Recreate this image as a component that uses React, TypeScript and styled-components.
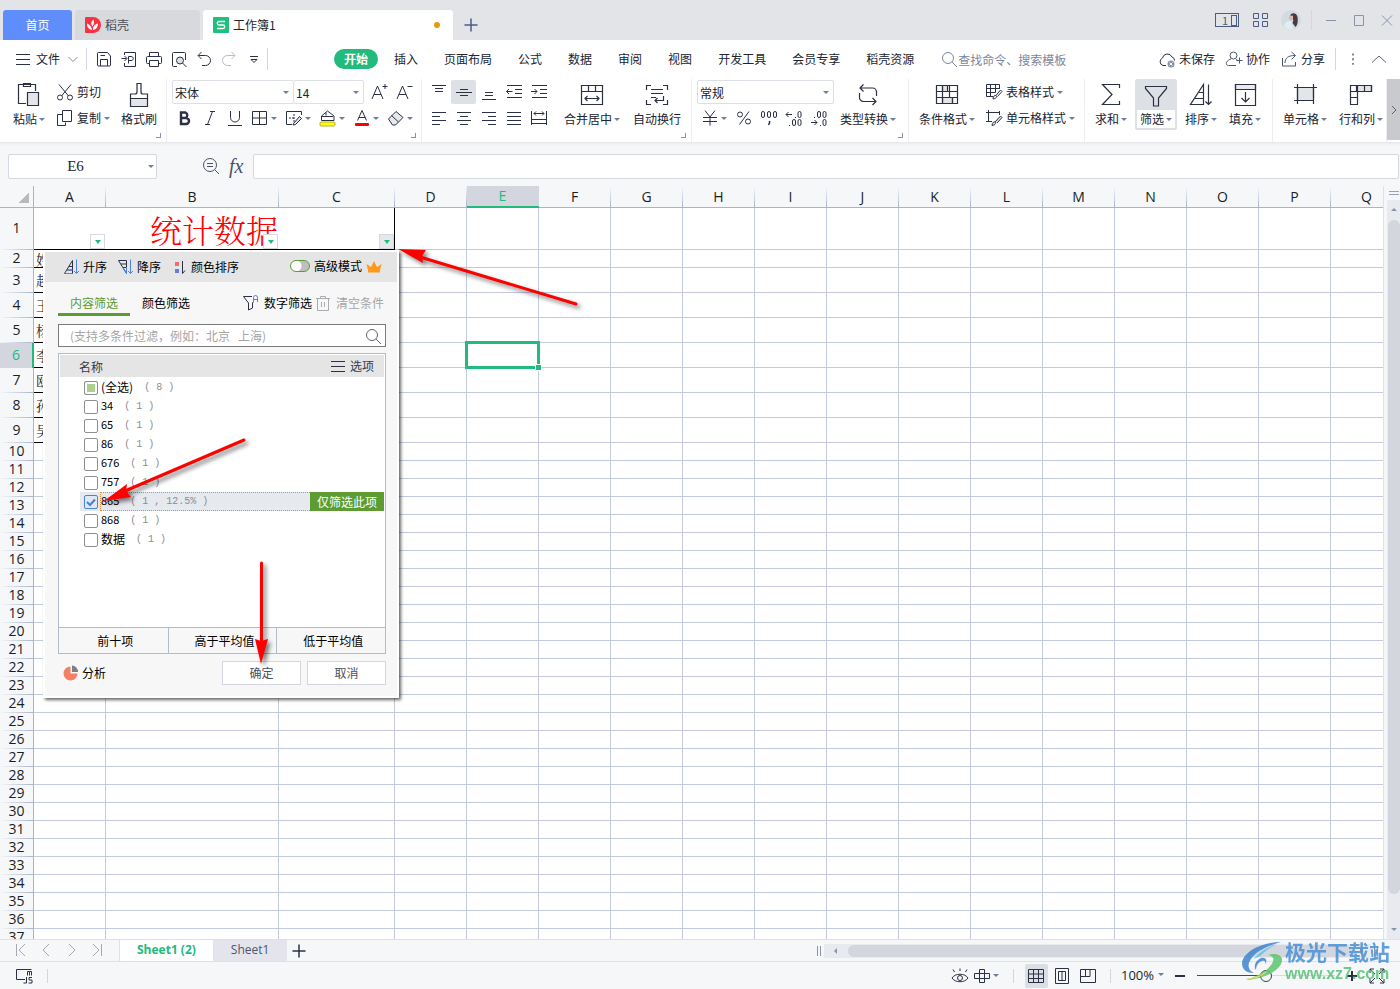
import React from "react";
import styled, { createGlobalStyle, css } from "styled-components";

const INK = "#2b3044";
const GREEN = "#21bb7e";
const LINE = "#c3cadd";
const CHROME = "#f6f7f9";
const SONG = `"Noto Serif CJK SC", "Noto Sans CJK SC", serif`;

const GlobalStyle = createGlobalStyle`
  *, *::before, *::after { box-sizing: border-box; }
  body { margin: 0; background: #fff; }
  body, button, input, select {
    font-family: "Noto Sans CJK SC", "Noto Sans", sans-serif;
    font-size: 12px;
    color: #20242f;
  }
  button { border: 0; padding: 0; background: none; white-space: nowrap; line-height: 18px; }
  svg { display: block; flex: none; }
`;

/* ---------- icons ---------- */

const shapes: Record<string, React.ReactNode> = {
  menu: <path d="M2 4.500h14M2 9.500h14M2 14.500h14" />,
  chevronDown: <path d="M4.500 7l4.500 4.500L13.500 7" stroke="#8a8f9d" />,
  chevronUp: <path d="M2 12.500l7-6.500 7 6.500" />,
  save: <path d="M2.500 3.500a1 1 0 011-1h9l3 3.500v9a1 1 0 01-1 1h-11a1 1 0 01-1-1zM5.500 16v-6.500h7V16M5.500 5.500h4.500" />,
  exportPdf: <path d="M4.500 5V2.500h11v14h-11V13M1.500 8.500h5M4.500 6l2.500 2.500L4.500 11M8.500 13.500V6.500h2.500c3 0 3 4 0 4H8.500" />,
  print: <path d="M4.500 6V2.500h9V6M4.500 13.500h-2a1 1 0 01-1-1V7.500a1 1 0 011-1h13a1 1 0 011 1v5a1 1 0 01-1 1h-2M4.500 10.500h9v6h-9z" />,
  preview: (
    <>
      <path d="M7 16.500H3.500a1 1 0 01-1-1v-12a1 1 0 011-1h11a1 1 0 011 1V10M12.500 13l4 4" />
      <circle cx="10" cy="10.500" r="3.500" fill="#dfe1e6" />
    </>
  ),
  undo: <path d="M6.500 2L3 5.500 6.500 9M3.500 5.500h7a5 5 0 010 10H7" />,
  redo: <path d="M11.500 2L15 5.500 11.500 9M14.500 5.500h-7a5 5 0 000 10H11" stroke="#b7bac2" />,
  more: <path d="M5 6.500h8M6 9.500l3 3 3-3z" />,
  cut: (
    <>
      <path d="M3 1.500l9.500 11.500M15 1.500L5.500 13" />
      <circle cx="4" cy="14.500" r="2.500" />
      <circle cx="14" cy="14.500" r="2.500" />
    </>
  ),
  copy: (
    <>
      <path d="M6.500 5.500h-5v11h8v-3" />
      <path d="M6.500 1.500h9v11h-9z" />
    </>
  ),
  bold: <path d="M5 3.500h4.500a3 3 0 010 5.500H5zM5 9h5a3 3 0 010 6H5z" strokeWidth="2.400" />,
  italic: <path d="M9 2.500h5M4 15.500h5M11.500 2.500L6.500 15.500" />,
  underline: <path d="M4.500 2v6.500a4.500 4.500 0 009 0V2M2 16.500h14" />,
  borders: <path d="M1.500 2.500h14v13h-14zM8.500 2.500v13M1.500 9h14" />,
  penTable: (
    <>
      <path d="M7 15.500H1.500v-13h15V6" />
      <path d="M9 5v8M4 9h6" strokeDasharray="2 1" />
      <path d="M8.500 14.500l6-7 2 2-6 6-2.500.500z" fill="#dfe1e6" />
    </>
  ),
  fill: (
    <>
      <path d="M8.500 2L2.500 7v4.500h12.500V7zM7 3.500v3M3 7.500h11" />
      <rect x="1" y="13" width="15" height="4" rx="1" fill="#ffff00" stroke="#b9ae45" />
    </>
  ),
  fontColor: (
    <>
      <path d="M4.500 11.500L9 1.500l4.500 10M6 8.500h6" />
      <rect x="2" y="14" width="14" height="3" rx="1" fill="#f00" stroke="none" />
    </>
  ),
  eraser: <path d="M1.500 10L9 2.500l7 6-7.500 7.500h-3zM4.500 6.500l7 6.500" fill="#e6e8ec" />,
  fontUp: <path d="M2 16L7.500 3 13 16M4 11.500h7M12.500 3.500h5M15 1v5" />,
  fontDown: <path d="M2 16L7.500 3 13 16M4 11.500h7M12.500 3.500h5" />,
  alignTop: <path d="M2 2.500h14M5 5.500h8M5 8.500h8" />,
  alignMid: <path d="M5 6.500h8M1 9.500h16M5 12.500h8" />,
  alignBottom: <path d="M5 9.500h8M5 12.500h8M2 16.500h14" />,
  outdent: <path d="M2 2.500h15M10 6.500h7M10 10.500h7M2 14.500h15M1.500 8.500h6M4 6L1.500 8.500 4 11" />,
  indent: <path d="M2 2.500h15M10 6.500h7M10 10.500h7M2 14.500h15M1 8.500h6M4.500 6L7 8.500 4.500 11" />,
  left: <path d="M2 3.500h14M2 7.500h8M2 11.500h14M2 15.500h8" />,
  center: <path d="M2 3.500h14M5 7.500h8M2 11.500h14M5 15.500h8" />,
  right: <path d="M2 3.500h14M8 7.500h8M2 11.500h14M8 15.500h8" />,
  justify: <path d="M2 3.500h14M2 7.500h14M2 11.500h14M2 15.500h14" />,
  distribute: <path d="M1.500 2v14M16.500 2v14M4 4.500h10M6 2.500l-2 2 2 2M12 2.500l2 2-2 2M1.500 10.500h15M1.500 14.500h15" />,
  yen: <path d="M4 1.500L9 8l5-6.500M2 8.500h14M2 12.500h14M9 8v8.500" />,
  percent: (
    <>
      <path d="M14 2.500L4.500 15.500" />
      <circle cx="5" cy="5.500" r="2.500" />
      <circle cx="13" cy="12.500" r="2.500" />
    </>
  ),
  thousands: (
    <>
      <rect x="1.500" y="2.500" width="3" height="6" rx="1.500" />
      <rect x="7.500" y="2.500" width="3" height="6" rx="1.500" />
      <rect x="13.500" y="2.500" width="3" height="6" rx="1.500" />
      <path d="M9.500 12v2l-1 2" strokeWidth="1.500" />
    </>
  ),
  decUp: (
    <>
      <path d="M1 5.500h6M3.500 3L1 5.500 3.500 8M10 8.500h1M4 16.500h1" />
      <rect x="13" y="2.500" width="3" height="6" rx="1.500" />
      <rect x="7.500" y="10.500" width="3" height="6" rx="1.500" />
      <rect x="13" y="10.500" width="3" height="6" rx="1.500" />
    </>
  ),
  decDown: (
    <>
      <path d="M1 13.500h6M4.500 11L7 13.500 4.500 16M10 16.500h1M4 8.500h1" />
      <rect x="7.500" y="2.500" width="3" height="6" rx="1.500" />
      <rect x="13" y="2.500" width="3" height="6" rx="1.500" />
      <rect x="13" y="10.500" width="3" height="6" rx="1.500" />
    </>
  ),
  tableStyle: (
    <>
      <path d="M8 13.500H1.500v-12h13V6M1.500 5.500h13M1.500 9.500h9M5.500 1.500v12M10.500 1.500v8" />
      <path d="M8 16c0-3 2-4 3-3.500s1 3-3 3.500zM11 12.500L15.500 7l1.500 1.500-4.500 5" fill="#fff" />
    </>
  ),
  cellStyle: (
    <>
      <path d="M3.500 1v12M1 3.500h14M1 12.500h6M14.500 2v4" />
      <path d="M7 16.500c0-3 2-4 3-3.500s1 3-3 3.500zM10 13l5.500-6 1.500 1.500-5 5.500" fill="#dfe1e6" />
    </>
  ),
  search: (
    <>
      <circle cx="8" cy="8" r="5.500" />
      <path d="M12 12l5 5" />
    </>
  ),
  zoomOut: (
    <>
      <circle cx="8" cy="8" r="6.500" />
      <path d="M13 13l4 4M5 6.500h6M5 9.500h6" />
    </>
  ),
  cloud: (
    <>
      <path d="M8 15.500H5a4 4 0 01-.500-7.500 5 5 0 019.500-1 3.500 3.500 0 012.500 3.500" />
      <circle cx="13" cy="14" r="3.500" fill="#8b93a8" stroke="none" />
      <path d="M11.500 12.500l3 3M14.500 12.500l-3 3" stroke="#fff" />
    </>
  ),
  people: (
    <>
      <circle cx="8.500" cy="5.500" r="3.500" />
      <path d="M6 9c-6 2-5.500 6.500-2.500 6.500H11M11 9.500l2 1M14.500 7.500v6M11.500 10.500h6" />
    </>
  ),
  share: <path d="M2.500 8v8h13v-4M5 13c0-5 3-7.500 10-7.500M11.500 2L15.500 5.500 11.500 9.500" />,
  dots: <path d="M9 2v2.500M9 8v2.500M9 14v2.500" strokeWidth="2.500" />,
  asc: (
    <>
      <path d="M1.500 15.500h8v-13zM6 8.500h3.500M4 12h5.500" />
      <path d="M13.500 1.500v14M11 13l2.500 2.500L16 13M1.500 15.500h8M4 12h5.500" stroke="#4d84e8" />
    </>
  ),
  desc: (
    <>
      <path d="M1.500 2.500h8v13zM4 6h5.500M6 9.500h3.500" />
      <path d="M13.500 1.500v14M11 13l2.500 2.500L16 13M9.500 9v6.500L6 9.500" stroke="#4d84e8" />
    </>
  ),
  colorSort: (
    <>
      <path d="M4 4h4v4H4z" fill="#ea6f6f" stroke="none" />
      <path d="M4 11h4v4H4z" fill="#5f7ee8" stroke="none" />
      <path d="M11.500 3v12.500l2.500-3" />
    </>
  ),
  funnelA: (
    <>
      <path d="M10 2.500H1.500L6.500 9v7l4-2V9l1-1.500" />
      <path d="M11.500 8V3.500a2 2 0 014 0V8M11.500 5.500h4" stroke="#4d84e8" />
    </>
  ),
  trash: <path d="M2 4.500h14M6.500 4V2.500h5V4M3.500 4.500v12h11v-12M7.500 8v5M10.500 8v5" stroke="#a9abb0" />,
  crown: <path d="M3 14.500h12V12l1.500-6-4.500 3L9 3 6 9 1.500 6 3 12z" fill="#ff9a1f" stroke="none" />,
  pie: (
    <>
      <path d="M8.500 2.500a7 7 0 107 7h-7z" fill="#f37f64" stroke="none" />
      <path d="M10 1.500a6.500 6.500 0 016 6.500h-6z" fill="#7d7f83" stroke="none" />
    </>
  ),
  first: <path d="M5.500 3v12M14 3L8 9l6 6" />,
  prev: <path d="M12 3L6 9l6 6" />,
  next: <path d="M6 3l6 6-6 6" />,
  last: <path d="M12.500 3v12M4 3l6 6-6 6" />,
  plus: <path d="M9 2.500v13M2.500 9h13" strokeWidth="1.500" />,
  macro: <path d="M8 12.500H1.500v-10h15M10 12.500H8M12.500 8.500v-4h2v4M14.500 4.500h2v4M11.500 10v6H8.500M17 10.500h-3V13h3v3h-3.500" />,
  eye: (
    <>
      <path d="M1 11c3-5 13-5 16 0-3 5-13 5-16 0zM3.500 5L2 2.500M14.500 5L16 2.500M9 4V1.500" />
      <circle cx="9" cy="11" r="2.500" />
    </>
  ),
  cross: <path d="M6.500 2.500h5v4h5v5h-5v4h-5v-4h-5v-5h5zM6.500 6.500h5v5h-5z" />,
  gridView: <path d="M1.500 2.500h15v13h-15zM1.500 7h15M1.500 11.500h15M6.500 2.500v13M11.500 2.500v13" />,
  pageView: <path d="M2.500 1.500h13v15h-13zM5.500 4.500h7v9h-7zM9 4.500v9" />,
  splitView: <path d="M1.500 2.500h15v13h-15zM6.500 2.500v7M1.500 9.500h9.500v-7" />,
  full: <path d="M2 6V2h4M12 2h4v4M16 12v4h-4M6 16H2v-4M2 2l5 5M16 2l-5 5M16 16l-5-5M2 16l5-5" />,
  minus: <path d="M4 9h10" strokeWidth="2" />,
  plusBold: <path d="M4 9h10M9 4v10" strokeWidth="2" />,
  apps: <path d="M2.500 2.500h5v5h-5zM11.500 2.500h5v5h-5zM2.500 10.500h5v5h-5zM11.500 10.500h5v5h-5z" />,
  winMin: <path d="M4 9.500h10" />,
  winMax: <path d="M4.500 4.500h9v10h-9z" />,
  winClose: <path d="M4 4.500l10 10M14 4.500l-10 10" />,
};

const bigShapes: Record<string, React.ReactNode> = {
  paste: (
    <>
      <path d="M11 22.500H3.500v-19h17V10M8.500 2.500h7v3h-7z" />
      <path d="M12.500 11.500h11v13h-11z" fill="#e3e5e9" />
    </>
  ),
  brush: (
    <>
      <path d="M12 2.500h4v8.500q0 2 2 2h4.500v4.500h-17V13H10q2 0 2-2z" />
      <path d="M5.500 17.500h17v8h-17z" fill="#e3e5e9" />
    </>
  ),
  merge: <path d="M3.500 4.500h21v19h-21zM3.500 10.500h21M10.500 4.500v6M17.500 4.500v6M7 17.500h14M9.500 15L7 17.500 9.500 20M18.500 15l2.500 2.500-2.500 2.500" />,
  wrap: <path d="M8 4.500H3.500V9M20 4.500h4.500V9M8 23.500H3.500V19M20 23.500h4.500V19M8 8.500h12M8 12.500h12M8 16.500h5M20.500 15v4.500H12M14.500 17L12 19.500l2.500 2.500" />,
  convert: <path d="M9.500 3.500L6 7l3.500 3.500M6.500 7h12a4 4 0 014 4v4M5.500 12v4a4 4 0 004 4.500H22M18.500 17l3.500 3.500-3.500 3.500" />,
  cond: (
    <>
      <path d="M9.500 4.500h5v6h-5zM9.500 16.500h10v6h-10z" fill="#e3e5e9" />
      <path d="M3.500 4.500h21v18h-21zM3.500 10.500h21M3.500 16.500h21M9.500 4.500v18M16.500 4.500v12M19.500 16.500v6" />
    </>
  ),
  sum: <path d="M22.500 7V3.500h-17L15 13.500 5.500 23.500h17V20" />,
  funnel: <path d="M3.500 4.500h21v2l-8 9.500v8h-5v-8l-8-9.500z" />,
  sort: <path d="M3.500 23.500h13V3.500zM12 11.500h4.500M8 17.500h8.500M21.500 3.500v20M18.500 20.500l3 3 3-3" />,
  fillDown: (
    <>
      <path d="M4.500 3.500h20v5h-20z" fill="#e8eaee" />
      <path d="M4.500 3.500h20v21h-20zM4.500 8.500h20M14.500 11v10M10.500 17l4 4 4-4" />
    </>
  ),
  cell: (
    <>
      <path d="M6.500 6.500h16v13h-16z" fill="#e3e5e9" />
      <path d="M6.500 3v20M22.500 3v14M3 6.500h23M3 19.500h17M22.500 20v3" />
    </>
  ),
  rowcol: (
    <>
      <path d="M9.500 4.500h15v6h-15z" fill="#e3e5e9" />
      <path d="M3.500 4.500h21v6h-21zM10.500 4.500v19h-7v-19M17.500 4.500v6M3.500 16.500h7" />
    </>
  ),
};

const Glyph = ({ name, color = INK, size = 18 }: { name: string; color?: string; size?: number }) => (
  <svg width={size} height={size} viewBox="0 0 18 18" fill="none" stroke={color} aria-hidden="true">
    {shapes[name]}
  </svg>
);
const BigGlyph = ({ name }: { name: string }) => (
  <svg width="28" height="28" viewBox="0 0 28 28" fill="none" stroke={INK} strokeWidth="1.200" aria-hidden="true">
    {bigShapes[name]}
  </svg>
);

const Caret = styled.i`
  flex: none;
  border: 3px solid transparent;
  border-top-color: #6f7d98;
  border-bottom-width: 0;
`;

/* ---------- frame ---------- */

const Page = styled.div`
  display: flex;
  flex-direction: column;
  height: 100vh;
  overflow: hidden;
  position: relative;
`;

const TitleBar = styled.header`
  display: flex;
  align-items: flex-end;
  height: 40px;
  background: #e3e4e8;
  padding-left: 3px;
  flex: none;
`;
const DocTab = styled.button<{ $w: number; $bg: string; $fg: string }>`
  display: flex;
  align-items: center;
  justify-content: center;
  gap: 4px;
  width: ${(p) => p.$w}px;
  height: 30px;
  margin-right: 3px;
  border-radius: 3px 3px 0 0;
  background: ${(p) => p.$bg};
  color: ${(p) => p.$fg};
  ${(p) => p.$w > 80 && css`justify-content: flex-start; padding: 0 13px 0 10px;`}
`;
const Unsaved = styled.i`
  width: 6px;
  height: 6px;
  margin-left: auto;
  border-radius: 50%;
  background: #e59a0c;
`;
const NewTab = styled.button`
  height: 30px;
  padding: 0 6px;
`;
const WindowTools = styled.div`
  display: flex;
  align-items: center;
  gap: 10px;
  height: 40px;
  margin-left: auto;
  padding-right: 4px;
`;
const ProfileTools = styled.div`
  display: flex;
  align-items: center;
  gap: 12px;
`;
const Counter = styled.button`
  display: flex;
  justify-content: flex-end;
  align-items: center;
  gap: 3px;
  width: 24px;
  height: 14px;
  padding-right: 1px;
  border: 1px solid #4c5b80;
  font-size: 11px;
  line-height: 12px;
  color: #4c5b80;
  &::after { content: ""; width: 6px; height: 11px; border: 1px solid #4c5b80; }
`;

const MenuBar = styled.nav`
  display: flex;
  align-items: center;
  height: 38px;
  padding-left: 14px;
  flex: none;
`;
const Rule = styled.i<{ $l?: number; $r?: number; $h?: number }>`
  width: 1px;
  height: ${(p) => p.$h ?? 22}px;
  margin: 0 ${(p) => p.$r ?? 0}px 0 ${(p) => p.$l ?? 0}px;
  background: #d3d7df;
  flex: none;
`;
const FileButton = styled.button`
  display: flex;
  align-items: center;
  gap: 4px;
`;
const QuickBar = styled.div`
  display: flex;
  gap: 7px;
  padding: 0 4px 0 8px;
`;
const Tabs = styled.div`
  display: flex;
  gap: 6px;
  margin-left: 66px;
`;
const MenuTab = styled.button<{ $on?: boolean }>`
  height: 20px;
  padding: 0 10px;
  border-radius: 10px;
  ${(p) => p.$on && css`background: ${GREEN}; color: #fff; font-weight: 700;`}
`;
const CommandSearch = styled.label`
  display: flex;
  align-items: center;
  margin-left: 16px;
  input {
    width: 120px;
    border: 0;
    padding: 0;
    outline: 0;
    background: none;
  }
  input::placeholder { color: #7c869c; opacity: 1; }
`;
const Account = styled.div`
  display: flex;
  align-items: center;
  gap: 10px;
  margin-left: auto;
  padding-right: 12px;
  button { display: flex; align-items: center; gap: 3px; }
`;

/* ---------- ribbon ---------- */

const Ribbon = styled.section`
  display: flex;
  height: 64px;
  padding-top: 1px;
  flex: none;
  overflow: hidden;
  position: relative;
  background: #fff;
`;
const Group = styled.div<{ $w: number; $gap: number; $pad: number }>`
  display: flex;
  align-items: flex-start;
  position: relative;
  flex: none;
  width: ${(p) => p.$w}px;
  gap: ${(p) => p.$gap}px;
  padding-left: ${(p) => p.$pad}px;
  border-right: 1px solid #eceef1;
`;
const Launcher = styled.i`
  position: absolute;
  right: 5px;
  bottom: 4px;
  width: 5px;
  height: 5px;
  border: solid #8a93a8;
  border-width: 0 1px 1px 0;
`;
const BigButton = styled.button<{ $on?: boolean }>`
  flex: none;
  > span { display: flex; align-items: center; justify-content: center; gap: 2px; height: 16px; }
  > span:first-child { height: 32px; }
  ${(p) => p.$on && css`
    height: 51px;
    margin: 0 -4px;
    border: 2px solid #dde1e6;
    border-radius: 2px;
    > span { height: 18px; padding: 0 3px; }
    > span:first-child { height: 29px; background: #dde1e6; }
  `}
`;
const Stack = styled.div`
  display: flex;
  flex-direction: column;
  flex: none;
`;
const Line = styled.div`
  display: flex;
  align-items: center;
  height: 26px;
`;
const Tool = styled.button<{ $on?: boolean }>`
  display: flex;
  align-items: center;
  justify-content: center;
  width: 25px;
  height: 24px;
  border-radius: 2px;
  background: ${(p) => (p.$on ? "#dde1e6" : "none")};
`;
const ToolDrop = styled.button`
  display: flex;
  align-items: center;
  gap: 2px;
  width: 34px;
  padding-left: 4px;
`;
const TextTool = styled.button`
  display: flex;
  align-items: center;
  gap: 3px;
`;
const Picker = styled.span<{ $w: number }>`
  display: flex;
  align-items: center;
  width: ${(p) => p.$w}px;
  height: 24px;
  padding-right: 4px;
  border: 1px solid #dcdfe5;
  border-radius: 2px;
  & + & { margin-left: -1px; margin-right: 2px; }
  select {
    appearance: none;
    flex: 1;
    min-width: 0;
    border: 0;
    padding: 0 2px;
    outline: 0;
    background: none;
  }
`;
const Scroller = styled.button`
  display: flex;
  align-items: center;
  justify-content: center;
  margin-left: auto;
  width: 13px;
  height: 61px;
  background: #c8cace;
  flex: none;
  position: sticky;
  right: 0;
`;

/* ---------- formula bar ---------- */

const FormulaBar = styled.section`
  display: flex;
  align-items: center;
  height: 44px;
  padding: 4px 1px 0 8px;
  background: linear-gradient(#e6e8eb, ${CHROME} 4px);
  flex: none;
`;
const NameBox = styled.span`
  display: flex;
  align-items: center;
  width: 149px;
  height: 25px;
  padding-right: 2px;
  border: 1px solid #d5d8df;
  border-radius: 2px;
  background: #fff;
  input {
    flex: 1;
    min-width: 0;
    border: 0;
    outline: 0;
    padding: 0 6px 0 0;
    text-align: center;
    background: none;
    font-family: "Liberation Serif", serif;
    font-size: 15px;
  }
`;
const FxTools = styled.div`
  display: flex;
  align-items: center;
  gap: 9px;
  width: 96px;
  padding-left: 45px;
`;
const Fx = styled.button`
  font: italic 20px/20px "Liberation Serif", serif;
  color: #4a5266;
`;
const Formula = styled.input`
  flex: 1;
  min-width: 0;
  height: 25px;
  border: 1px solid #d5d8df;
  border-radius: 2px;
`;

/* ---------- sheet ---------- */

const Work = styled.main`
  display: flex;
  flex: 1;
  min-height: 0;
  position: relative;
  background: ${CHROME};
`;
const GridClip = styled.div`
  flex: 1;
  min-width: 0;
  overflow: hidden;
`;
const Grid = styled.table`
  table-layout: fixed;
  width: 0;
  border-collapse: separate;
  border-spacing: 0;
  background: #fff;
  font-family: "Open Sans", "Noto Sans CJK SC", sans-serif;
  font-size: 14px;
  th, td { padding: 0; font-weight: 400; line-height: 16px; }
`;
const ColHead = styled.th<{ $on?: boolean }>`
  height: 22px;
  border-bottom: 1px solid #a9b4cc;
  color: #1b1e27;
  background: linear-gradient(transparent, #a9b4cc) right / 1px 100% no-repeat ${CHROME};
  && { padding-right: 1px; }
  ${(p) => p.$on && css`background: #d3d6de; color: ${GREEN}; border-bottom: 2px solid ${GREEN};`}
`;
const Corner = styled.th`
  border-right: 1px solid #a9b4cc;
  border-bottom: 1px solid #a9b4cc;
  background: linear-gradient(135deg, transparent 50%, #b8babd 50%) 18px 6px / 11px 11px no-repeat ${CHROME};
`;
const RowHead = styled.th<{ $h: number; $on?: boolean }>`
  height: ${(p) => p.$h}px;
  color: #1b1e27;
  border-right: 1px solid #a9b4cc;
  background: linear-gradient(to right, transparent, #a9b4cc) bottom / 100% 1px no-repeat ${CHROME};
  && { padding-bottom: 2px; }
  ${(p) => p.$on && css`background: #d3d6de; color: ${GREEN}; border-right: 2px solid ${GREEN};`}
`;
const Cell = styled.td<{ $ink?: boolean; $sel?: boolean }>`
  border-right: 1px solid ${LINE};
  border-bottom: 1px solid ${(p) => (p.$ink ? "#000" : LINE)};
  ${(p) => p.$ink && css`text-indent: 2px; font-family: ${SONG};`}
  ${(p) => p.$sel && css`
    position: relative;
    &::before {
      content: "";
      position: absolute;
      inset: -2px;
      border: 3px solid ${GREEN};
    }
    &::after {
      content: "";
      position: absolute;
      right: -4px;
      bottom: -4px;
      width: 7px;
      height: 7px;
      border: 1px solid #fff;
      background: ${GREEN};
    }
  `}
`;
const TitleCell = styled.td`
  position: relative;
  border-right: 1px solid #000;
  border-bottom: 1px solid #000;
  text-align: center;
  color: #f00;
`;
const TitleText = styled.div`
  font-family: ${SONG};
  font-size: 32px;
  font-weight: 300;
  line-height: 38px;
`;
const FilterMarks = styled.div`
  position: absolute;
  inset: auto 0 0 0;
  display: grid;
  grid-template-columns: 71px 173px 116px;
  justify-items: end;
`;
const FilterMark = styled.button<{ $on?: boolean }>`
  display: flex;
  align-items: center;
  justify-content: center;
  width: 15px;
  height: 15px;
  border: 1px solid #d6d9e0;
  background: ${(p) => (p.$on ? "#e4e7ec" : "#fff")};
  ${Caret} { border-top-color: ${GREEN}; border-top-width: 4px; }
`;
const VScroll = styled.div`
  display: flex;
  flex-direction: column;
  align-items: center;
  width: 17px;
  padding-left: 3px;
  border-left: 1px solid #dfe1e8;
  flex: none;
`;
const Splitter = styled.i`
  width: 10px;
  height: 4px;
  margin: 5px 0 5px;
  border: solid #97a2b8;
  border-width: 1px 0;
  flex: none;
`;
const Track = styled.div`
  display: flex;
  flex-direction: column;
  align-items: center;
  align-self: stretch;
  flex: 1;
  padding: 8px 0 8px;
  background: #e9eaef;
`;
const VThumb = styled.i`
  flex: 1;
  width: 12px;
  margin: 9px 0 34px;
  border-radius: 6px;
  background: #d4d6dd;
`;
const ArrowTip = styled.i<{ $dir: "up" | "down" | "left" | "right" }>`
  border: 3px solid transparent;
  flex: none;
  ${(p) => p.$dir === "up" && css`border-bottom-color: #8794ad; border-top-width: 0;`}
  ${(p) => p.$dir === "down" && css`border-top-color: #8794ad; border-bottom-width: 0;`}
  ${(p) => p.$dir === "left" && css`border-right-color: #8794ad; border-left-width: 0;`}
  ${(p) => p.$dir === "right" && css`border-left-color: #8794ad; border-right-width: 0;`}
`;

/* ---------- filter panel ---------- */

const Panel = styled.section`
  position: absolute;
  left: 43px;
  top: 64px;
  width: 356px;
  border: 2px solid #fff;
  background: #f7f7f7;
  box-shadow: 2px 2px 3px rgba(0, 0, 0, 0.6);
  color: #000;
  button, label { color: #000; }
`;
const PanelHead = styled.div`
  display: flex;
  align-items: center;
  height: 30px;
  padding: 0 14px 0 18px;
  background: #e5e5e5;
`;
const PanelTool = styled.button<{ $gap: number; $muted?: boolean }>`
  display: flex;
  align-items: center;
  gap: 2px;
  margin-right: ${(p) => p.$gap}px;
  && { ${(p) => p.$muted && css`color: #a5a5a5;`} }
`;
const Toggle = styled.label`
  display: flex;
  align-items: center;
  gap: 4px;
  margin: 0 3px 0 auto;
  padding-bottom: 2px;
  line-height: 16px;
  input {
    appearance: none;
    width: 20px;
    height: 12px;
    margin: 0;
    border: 1px solid #5c9c30;
    border-radius: 6px;
    background: radial-gradient(circle at 5px 5px, #fff 5px, #bfbfbf 6px);
  }
`;
const PanelBody = styled.div`
  padding: 0 11px 11px 13px;
`;
const PanelTabs = styled.div`
  display: flex;
  align-items: center;
  height: 34px;
  margin-right: 2px;
`;
const PanelTab = styled.button<{ $on?: boolean }>`
  height: 34px;
  padding: 10px 12px 0;
  border-bottom: 3px solid ${(p) => (p.$on ? "#5c9c30" : "transparent")};
  && { color: ${(p) => (p.$on ? "#5c9c30" : "#000")}; }
`;
const Conditions = styled.div`
  display: flex;
  margin-left: auto;
  padding-top: 8px;
  button { gap: 4px; }
`;
const PanelSearch = styled.label`
  display: flex;
  align-items: center;
  height: 23px;
  margin: 8px 0 6px;
  padding: 0 3px 0 11px;
  border: 1px solid #7b7b7b;
  background: #fff;
  input { flex: 1; border: 0; padding: 0; outline: 0; background: none; }
  input::placeholder { color: #a5a5a5; opacity: 1; }
`;
const ListBox = styled.div`
  display: flex;
  flex-direction: column;
  height: 301px;
  border: 1px solid #b3bcc9;
  background: #fff;
`;
const ListHead = styled.div`
  display: flex;
  align-items: center;
  justify-content: space-between;
  height: 22px;
  margin: 1px 1px 0;
  padding: 0 10px 0 19px;
  background: #e5e5e5;
  color: #333a4a;
  flex: none;
  button { display: flex; align-items: center; gap: 3px; color: #333a4a; }
`;
const Items = styled.ul`
  flex: 1;
  margin: 0;
  padding: 1px 0 0;
  list-style: none;
`;
const Item = styled.li<{ $on?: boolean }>`
  display: flex;
  align-items: stretch;
  height: 19px;
  margin: 0 1px 0 21px;
  background: ${(p) => (p.$on ? "#e6e9ee" : "none")};
`;
const ItemLabel = styled.label<{ $on?: boolean }>`
  display: flex;
  align-items: center;
  flex: 1;
  padding-left: 4px;
  line-height: 17px;
  input {
    appearance: none;
    width: 14px;
    height: 14px;
    margin: 0 3px 0 0;
    border: 1px solid #8f8f8f;
    border-radius: 2px;
    background: #fff;
  }
  input[data-part="true"] { background: #a9d28f; box-shadow: inset 0 0 0 2px #fff; }
  input:checked {
    border-color: #4b85d6;
    background: url('data:image/svg+xml,<svg xmlns="http://www.w3.org/2000/svg" viewBox="0 0 12 12" fill="none" stroke="%234b7fd0" stroke-width="2"><path d="M2 6l3 3 5-5.500"/></svg>') #dfe9f8;
  }
  > span {
    display: flex;
    align-items: center;
    flex: 1;
    align-self: stretch;
    border: 1px dotted ${(p) => (p.$on ? "#e88a3a" : "transparent")};
    border-right: 0;
    margin-left: -1px;
  }
`;
const ItemName = styled.b<{ $cjk: boolean }>`
  padding-bottom: 2px;
  font-size: ${(p) => (p.$cjk ? 12 : 11)}px;
  font-weight: 400;
`;
const Count = styled.small`
  margin-left: 11px;
  font-family: "Liberation Mono", monospace;
  font-size: 10px;
  color: #8d8d8d;
`;
const OnlyThis = styled.button`
  width: 74px;
  background: #5c9c30;
  && { color: #fff; }
`;
const QuickPicks = styled.div`
  display: grid;
  grid-template-columns: repeat(3, 1fr);
  height: 26px;
  border-top: 1px solid #b3bcc9;
  background: #f7f7f7;
  button + button { border-left: 1px solid #b3bcc9; }
  button { padding-left: 4px; }
`;
const PanelFoot = styled.div`
  display: flex;
  align-items: center;
  gap: 6px;
  margin-top: 7px;
  padding-left: 4px;
`;
const Analyse = styled.div`
  margin-right: auto;
`;
const Dialog = styled.button`
  width: 79px;
  height: 24px;
  border: 1px solid #d3d6de;
  background: #fff;
  && { color: #4a4f5c; }
`;

/* ---------- footer ---------- */

const SheetBar = styled.footer`
  display: flex;
  height: 23px;
  border: solid #dfe1e8;
  border-width: 1px 0;
  background: ${CHROME};
  flex: none;
`;
const SheetNav = styled.div`
  display: flex;
  align-items: center;
  gap: 8px;
  width: 120px;
  padding: 0 0 1px 11px;
  border-right: 1px solid #dfe1e8;
`;
const SheetTab = styled.button<{ $on?: boolean }>`
  padding: 0 ${(p) => (p.$on ? 17 : 18)}px 1px;
  font-family: "Open Sans", sans-serif;
  background: ${(p) => (p.$on ? "#fff" : "#e4e5ec")};
  color: ${(p) => (p.$on ? GREEN : "#4c566e")};
  font-weight: ${(p) => (p.$on ? 700 : 400)};
`;
const AddSheet = styled.button`
  padding: 0 3px;
`;
const HScroll = styled.div`
  display: flex;
  align-items: center;
  width: 561px;
  gap: 3px;
  margin: 0 22px 0 auto;
`;
const Grip = styled.i`
  width: 4px;
  height: 10px;
  border: solid #8794ad;
  border-width: 0 1px;
`;
const HTrack = styled.div`
  display: flex;
  align-items: center;
  flex: 1;
  height: 14px;
  padding: 0 8px 0 10px;
  background: #e9eaef;
`;
const HThumb = styled.i`
  flex: 1;
  height: 12px;
  margin: 0 8px 0 11px;
  border-radius: 6px;
  background: #d4d6dd;
`;
const StatusBar = styled.footer`
  display: flex;
  align-items: center;
  height: 27px;
  padding: 0 14px 0 15px;
  background: ${CHROME};
  flex: none;
`;
const ViewTools = styled.div`
  display: flex;
  align-items: center;
  margin-left: auto;
`;
const ViewButton = styled.button<{ $on?: boolean }>`
  display: flex;
  align-items: center;
  justify-content: center;
  width: 23px;
  height: 24px;
  margin-right: 3px;
  border-radius: 2px;
  background: ${(p) => (p.$on ? "#dadfe6" : "none")};
`;
const ZoomPick = styled.button`
  display: flex;
  align-items: center;
  gap: 4px;
  margin-right: 7px;
  padding-bottom: 2px;
  font-family: "Open Sans", sans-serif;
  font-size: 13px;
`;
const ZoomSlider = styled.input`
  appearance: none;
  width: 138px;
  height: 12px;
  margin: 0 8px;
  background: linear-gradient(to right, #3f4a66 50%, #d7dae1 50%) center / 100% 1px no-repeat;
  &::-webkit-slider-thumb {
    appearance: none;
    width: 12px;
    height: 12px;
    border: 1px solid #3b3f4a;
    border-radius: 50%;
    background: ${CHROME};
  }
`;

/* ---------- overlays ---------- */

const Arrows = styled.svg`
  position: absolute;
  left: 0;
  top: 0;
  pointer-events: none;
  filter: drop-shadow(3px 3px 2px rgba(0, 0, 0, 0.5));
`;
const Brand = styled.div`
  position: absolute;
  right: 10px;
  bottom: 5px;
  display: flex;
  align-items: center;
  gap: 2px;
  opacity: 0.85;
  pointer-events: none;
`;
const BrandText = styled.div`
  color: #4a90d6;
  font-size: 21px;
  font-weight: 700;
  line-height: 26px;
  small {
    display: block;
    font: 700 16px/20px "Liberation Sans", sans-serif;
    color: #5bc07a;
  }
`;

const columns = "ABCDEFGHIJKLMNOPQ".split("");
const colWidth = (c: string) => (c === "B" ? 173 : c === "C" ? 116 : 72);
const names: Record<number, string> = { 2: "姓名", 3: "赵", 4: "王", 5: "杨", 6: "李", 7: "欧", 8: "孙", 9: "吴" };
const rowHeight = (r: number) => (r === 1 ? 42 : r >= 3 && r <= 9 ? 25 : 18);
const rows = Array.from({ length: 37 }, (_, i) => i + 1);

const filterItems = [
  { name: "(全选)", count: "( 8 )", part: true },
  { name: "34", count: "( 1 )" },
  { name: "65", count: "( 1 )" },
  { name: "86", count: "( 1 )" },
  { name: "676", count: "( 1 )" },
  { name: "757", count: "( 1 )" },
  { name: "865", count: "( 1 , 12.5% )", on: true },
  { name: "868", count: "( 1 )" },
  { name: "数据", count: "( 1 )" },
];

const Big = ({ icon, label, drop = true, on }: { icon: string; label: string; drop?: boolean; on?: boolean }) => (
  <BigButton $on={on}>
    <span><BigGlyph name={icon} /></span>
    <span>{label}{drop && <Caret />}</span>
  </BigButton>
);
const IconTool = ({ icon, on }: { icon: string; on?: boolean }) => (
  <Tool $on={on} aria-label={icon}><Glyph name={icon} /></Tool>
);
const DropTool = ({ icon }: { icon: string }) => (
  <ToolDrop aria-label={icon}><Glyph name={icon} /><Caret /></ToolDrop>
);

const FilterPanel = () => (
  <Panel>
    <PanelHead>
      <PanelTool $gap={10}><Glyph name="asc" />升序</PanelTool>
      <PanelTool $gap={10}><Glyph name="desc" />降序</PanelTool>
      <PanelTool $gap={0}><Glyph name="colorSort" />颜色排序</PanelTool>
      <Toggle><input type="checkbox" />高级模式</Toggle>
      <Glyph name="crown" />
    </PanelHead>
    <PanelBody>
      <PanelTabs>
        <PanelTab $on>内容筛选</PanelTab>
        <PanelTab>颜色筛选</PanelTab>
        <Conditions>
          <PanelTool $gap={2}><Glyph name="funnelA" />数字筛选</PanelTool>
          <PanelTool $gap={0} $muted><Glyph name="trash" />清空条件</PanelTool>
        </Conditions>
      </PanelTabs>
      <PanelSearch>
        <input aria-label="搜索" placeholder="(支持多条件过滤，例如：北京   上海)" />
        <Glyph name="search" color="#5b6478" />
      </PanelSearch>
      <ListBox>
        <ListHead>
          名称
          <button><Glyph name="menu" />选项</button>
        </ListHead>
        <Items>
          {filterItems.map((it) => (
            <Item key={it.name} $on={it.on}>
              <ItemLabel $on={it.on}>
                <input type="checkbox" defaultChecked={it.on} data-part={it.part} />
                <span><ItemName $cjk={!/^\d+$/.test(it.name)}>{it.name}</ItemName><Count>{it.count}</Count></span>
              </ItemLabel>
              {it.on && <OnlyThis>仅筛选此项</OnlyThis>}
            </Item>
          ))}
        </Items>
        <QuickPicks>
          <button>前十项</button>
          <button>高于平均值</button>
          <button>低于平均值</button>
        </QuickPicks>
      </ListBox>
      <PanelFoot>
        <Analyse><PanelTool $gap={0}><Glyph name="pie" />分析</PanelTool></Analyse>
        <Dialog>确定</Dialog>
        <Dialog>取消</Dialog>
      </PanelFoot>
    </PanelBody>
  </Panel>
);

const Sheet = () => (
  <Grid>
    <colgroup>
      <col style={{ width: 34 }} />
      {columns.map((c) => <col key={c} style={{ width: colWidth(c) }} />)}
    </colgroup>
    <thead>
      <tr>
        <Corner />
        {columns.map((c) => <ColHead key={c} $on={c === "E"}>{c}</ColHead>)}
      </tr>
    </thead>
    <tbody>
      {rows.map((r) => (
        <tr key={r}>
          <RowHead $h={rowHeight(r)} $on={r === 6}>{r}</RowHead>
          {r === 1 && (
            <TitleCell colSpan={3}>
              <TitleText>统计数据</TitleText>
              <FilterMarks>
                <FilterMark aria-label="A"><Caret /></FilterMark>
                <FilterMark aria-label="B"><Caret /></FilterMark>
                <FilterMark aria-label="C" $on><Caret /></FilterMark>
              </FilterMarks>
            </TitleCell>
          )}
          {columns.slice(r === 1 ? 3 : 0).map((c) => (
            <Cell key={c} $ink={c === "A" && r in names} $sel={c === "E" && r === 6}>
              {c === "A" ? names[r] : null}
            </Cell>
          ))}
        </tr>
      ))}
    </tbody>
  </Grid>
);

export default function App() {
  return (
    <Page>
      <GlobalStyle />
      <TitleBar>
        <DocTab $w={69} $bg="#5f8dfb" $fg="#fff">首页</DocTab>
        <DocTab $w={125} $bg="#d8d9dd" $fg="#4a4f5c">
          <svg width="16" height="16" viewBox="0 0 16 16" aria-hidden="true">
            <path d="M1 0h7a8 8 0 010 16H1a1 1 0 01-1-1V1a1 1 0 011-1z" fill="#fb3040" />
            <path d="M7 13C3 12 1.500 9 2 6.500c3 1 4.500 3.500 5 6.500zM7.500 9.500C5.500 7 6 4 8.500 2.500c1 2 .500 5-1 7zM8 13c0-4 2-6 5-6.500 0 3.500-2 6-5 6.500z" fill="#fff" />
          </svg>
          稻壳
        </DocTab>
        <DocTab $w={250} $bg="#fff" $fg="#20242f">
          <svg width="16" height="16" viewBox="0 0 16 16" aria-hidden="true">
            <rect width="16" height="16" rx="1" fill="#1fbf7c" />
            <path d="M12 4.500H6a1.500 1.500 0 000 3.500h4a1.500 1.500 0 010 3.500H4" fill="none" stroke="#fff" strokeWidth="1.300" />
          </svg>
          工作簿1
          <Unsaved />
        </DocTab>
        <NewTab aria-label="新建"><Glyph name="plus" color="#4c5b80" /></NewTab>
        <WindowTools>
          <ProfileTools>
            <Counter>1</Counter>
            <Glyph name="apps" color="#4c5b80" />
            <svg width="20" height="20" viewBox="0 0 20 20" aria-hidden="true">
              <circle cx="10" cy="10" r="10" fill="#cfdde3" />
              <path d="M10 4c3-2 6 0 6.500 3s.500 8-2 10l-3-4 1-3-4-2z" fill="#4a3a40" />
              <path d="M8.500 6l3.500-.500v4L10 11 8 9z" fill="#e3b8a8" />
              <path d="M3 16c1-4 3-5 7-5l2.500 8c-4 1-7 0-9.500-3z" fill="#e0eef1" />
            </svg>
          </ProfileTools>
          <Rule $h={20} />
          <Glyph name="winMin" color="#8b93ab" />
          <Glyph name="winMax" color="#8b93ab" />
          <Glyph name="winClose" color="#8b93ab" />
        </WindowTools>
      </TitleBar>

      <MenuBar>
        <FileButton><Glyph name="menu" />文件<Glyph name="chevronDown" /></FileButton>
        <Rule $l={4} />
        <QuickBar>
          {["save", "exportPdf", "print", "preview", "undo", "redo", "more"].map((n) => <Glyph key={n} name={n} />)}
        </QuickBar>
        <Rule />
        <Tabs>
          {["开始", "插入", "页面布局", "公式", "数据", "审阅", "视图", "开发工具", "会员专享", "稻壳资源"].map((t, i) => (
            <MenuTab key={t} $on={i === 0}>{t}</MenuTab>
          ))}
        </Tabs>
        <CommandSearch>
          <Glyph name="search" color="#7c869c" />
          <input aria-label="搜索" placeholder="查找命令、搜索模板" />
        </CommandSearch>
        <Account>
          <button><Glyph name="cloud" />未保存</button>
          <button><Glyph name="people" color="#4c566e" />协作</button>
          <button><Glyph name="share" color="#4c566e" />分享</button>
          <Rule />
          <Glyph name="dots" color="#7c869c" size={14} />
          <Glyph name="chevronUp" color="#5b6478" />
        </Account>
      </MenuBar>

      <Ribbon>
        <Group $w={167} $gap={11} $pad={13}>
          <Big icon="paste" label="粘贴" />
          <Stack>
            <Line><TextTool><Glyph name="cut" />剪切</TextTool></Line>
            <Line><TextTool><Glyph name="copy" />复制<Caret /></TextTool></Line>
          </Stack>
          <Big icon="brush" label="格式刷" drop={false} />
          <Launcher />
        </Group>
        <Group $w={255} $gap={0} $pad={5}>
          <Stack>
            <Line>
              <Picker $w={122}><select aria-label="字体"><option>宋体</option></select><Caret /></Picker>
              <Picker $w={71}><select aria-label="字号"><option>14</option></select><Caret /></Picker>
              <IconTool icon="fontUp" /><IconTool icon="fontDown" />
            </Line>
            <Line>
              <IconTool icon="bold" /><IconTool icon="italic" /><IconTool icon="underline" />
              <DropTool icon="borders" /><DropTool icon="penTable" /><DropTool icon="fill" />
              <DropTool icon="fontColor" /><DropTool icon="eraser" />
            </Line>
          </Stack>
          <Launcher />
        </Group>
        <Group $w={270} $gap={13} $pad={4}>
          <Stack>
            <Line>
              <IconTool icon="alignTop" /><IconTool icon="alignMid" on /><IconTool icon="alignBottom" />
              <IconTool icon="outdent" /><IconTool icon="indent" />
            </Line>
            <Line>
              {["left", "center", "right", "justify", "distribute"].map((n) => <IconTool key={n} icon={n} />)}
            </Line>
          </Stack>
          <Big icon="merge" label="合并居中" />
          <Big icon="wrap" label="自动换行" drop={false} />
          <Launcher />
        </Group>
        <Group $w={217} $gap={6} $pad={5}>
          <Stack>
            <Line><Picker $w={137}><select aria-label="数字格式"><option>常规</option></select><Caret /></Picker></Line>
            <Line>
              <DropTool icon="yen" />
              {["percent", "thousands", "decUp", "decDown"].map((n) => <IconTool key={n} icon={n} />)}
            </Line>
          </Stack>
          <Big icon="convert" label="类型转换" />
          <Launcher />
        </Group>
        <Group $w={176} $gap={10} $pad={10}>
          <Big icon="cond" label="条件格式" />
          <Stack>
            <Line><TextTool><Glyph name="tableStyle" />表格样式<Caret /></TextTool></Line>
            <Line><TextTool><Glyph name="cellStyle" />单元格样式<Caret /></TextTool></Line>
          </Stack>
        </Group>
        <Group $w={188} $gap={12} $pad={10}>
          <Big icon="sum" label="求和" />
          <Big icon="funnel" label="筛选" on />
          <Big icon="sort" label="排序" />
          <Big icon="fillDown" label="填充" />
        </Group>
        <Group $w={114} $gap={12} $pad={10}>
          <Big icon="cell" label="单元格" />
          <Big icon="rowcol" label="行和列" />
        </Group>
        <Scroller aria-label="更多"><Glyph name="next" size={12} /></Scroller>
      </Ribbon>

      <FormulaBar>
        <NameBox><input aria-label="名称框" defaultValue="E6" /><Caret /></NameBox>
        <FxTools>
          <Glyph name="zoomOut" color="#4a5266" />
          <Fx>fx</Fx>
        </FxTools>
        <Formula aria-label="编辑栏" />
      </FormulaBar>

      <Work>
        <GridClip><Sheet /></GridClip>
        <VScroll>
          <Splitter />
          <Track><ArrowTip $dir="up" /><VThumb /><ArrowTip $dir="down" /></Track>
        </VScroll>
        <FilterPanel />
      </Work>

      <SheetBar>
        <SheetNav>
          {["first", "prev", "next", "last"].map((n) => <Glyph key={n} name={n} color="#a3a8b3" />)}
        </SheetNav>
        <SheetTab $on>Sheet1 (2)</SheetTab>
        <SheetTab>Sheet1</SheetTab>
        <AddSheet aria-label="新建工作表"><Glyph name="plus" /></AddSheet>
        <HScroll>
          <Grip />
          <HTrack><ArrowTip $dir="left" /><HThumb /><ArrowTip $dir="right" /></HTrack>
          <Grip />
        </HScroll>
      </SheetBar>

      <StatusBar>
        <Glyph name="macro" />
        <Rule $h={14} $l={14} />
        <ViewTools>
          <Glyph name="eye" />
          <ToolDrop aria-label="护眼"><Glyph name="cross" /><Caret /></ToolDrop>
          <Rule $h={14} $l={10} $r={11} />
          <ViewButton $on aria-label="普通"><Glyph name="gridView" /></ViewButton>
          <ViewButton aria-label="分页"><Glyph name="pageView" /></ViewButton>
          <ViewButton aria-label="布局"><Glyph name="splitView" /></ViewButton>
          <Rule $h={14} $l={7} $r={10} />
          <ZoomPick>100%<Caret /></ZoomPick>
          <Glyph name="minus" />
          <ZoomSlider type="range" aria-label="缩放" defaultValue={50} />
          <Glyph name="plusBold" />
          <Rule $h={0} $l={6} />
          <Glyph name="full" />
        </ViewTools>
      </StatusBar>

      <Arrows width="620" height="700" viewBox="0 0 620 700" fill="#f00" stroke="#f00" strokeLinecap="round" aria-hidden="true">
        <path d="M420 257L576 304" strokeWidth="3" />
        <path d="M398 249l28 1-4 6 1 7z" stroke="none" />
        <path d="M125 491L244 440" strokeWidth="3" />
        <path d="M104 501l23-17-1 7 5 6z" stroke="none" />
        <path d="M261.500 563v80" strokeWidth="3" />
        <path d="M261 664l-6-25 6 2 7-2z" stroke="none" />
      </Arrows>
      <Brand>
        <svg width="42" height="42" viewBox="0 0 42 42" aria-hidden="true">
          <path d="M40 2C20 2 2 12 1 23c0 7 5 10 12 10-6-3-7-8-3-14C15 11 26 6 40 2z" fill="#3f86cf" />
          <path d="M36 4c-9 3-18 8-23 15l6-3c5-5 11-9 17-12z" fill="#58c3e8" />
          <path d="M5 40c20-1 37-11 36-21-1-5-8-6-14-4 6 1 7 5 3 10-5 7-14 11-25 15z" fill="#5cc56e" />
          <path d="M4 39c8-1 16-4 22-8-4 5-12 9-22 8z" fill="#d8dc4a" />
          <path d="M15 30c-3-4 0-10 5-12 5-1 7 3 4 6 1-3-1-4-3-3-4 1-6 5-6 9z" fill="#3f86cf" />
        </svg>
        <BrandText>极光下载站<small>www.xz7.com</small></BrandText>
      </Brand>
    </Page>
  );
}
